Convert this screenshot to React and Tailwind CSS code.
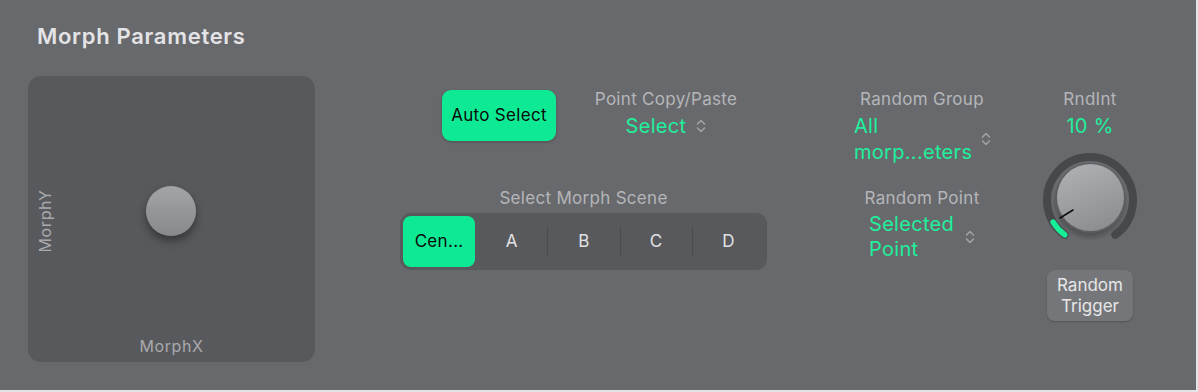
import React from "react";

function Chevrons() {
  return (
    <svg width="10" height="16" viewBox="0 0 10 16" fill="none" className="shrink-0">
      <path d="M1.5 6 L5 2.5 L8.5 6" stroke="#a3a4a8" strokeWidth="1.5" strokeLinecap="round" strokeLinejoin="round" />
      <path d="M1.5 10 L5 13.5 L8.5 10" stroke="#a3a4a8" strokeWidth="1.5" strokeLinecap="round" strokeLinejoin="round" />
    </svg>
  );
}

function Knob() {
  return (
    <svg width="96" height="100" viewBox="0 0 96 100" fill="none">
      <defs>
        <linearGradient id="kg" x1="0.3" y1="0" x2="0.7" y2="1">
          <stop offset="0" stopColor="#aeafb3" />
          <stop offset="1" stopColor="#8c8d91" />
        </linearGradient>
        <radialGradient id="ks" cx="0.5" cy="0.5" r="0.5">
          <stop offset="0.7" stopColor="#000" stopOpacity="0.35" />
          <stop offset="1" stopColor="#000" stopOpacity="0" />
        </radialGradient>
      </defs>
      <path d="M 22.7 82.8 A 43 43 0 1 1 73.3 82.8" stroke="#47484b" strokeWidth="8" strokeLinecap="round" />
      <path d="M 22.7 82.8 A 43 43 0 0 1 11.1 70.1" stroke="#16ee98" strokeWidth="5.5" strokeLinecap="round" />
      <circle cx="48" cy="51" r="38" fill="url(#ks)" />
      <circle cx="48.5" cy="46" r="35" fill="#5d5e62" />
      <circle cx="48.5" cy="45.5" r="33.5" fill="url(#kg)" />
      <path d="M18 66 L31 58" stroke="#111" strokeWidth="1.6" strokeLinecap="round" />
    </svg>
  );
}

export default function App() {
  const segs = ["A", "B", "C", "D"];
  return (
    <div className="w-[1198px] h-[392px] bg-[#e4e4e4] font-['Inter',sans-serif] tracking-[0.3px]">
      <div className="w-[1196px] h-[390px] bg-[#68696d] flex flex-col">
        <div className="pl-[37px] pt-[23px] text-[22px] leading-[26px] font-semibold text-[#e4e4e6] tracking-[0.7px]">
          Morph Parameters
        </div>
        <div className="flex items-start mt-[27px] pl-[28px]">
          {/* XY pad */}
          <div className="relative w-[287px] h-[286px] rounded-[13px] bg-[#58595c] shrink-0">
            <div className="absolute left-[17px] top-[145px] -translate-x-1/2 -translate-y-1/2 -rotate-90 text-[16px] leading-[18px] tracking-[0.6px] text-[#a9aaad]">
              MorphY
            </div>
            <div className="absolute left-0 right-0 bottom-[7px] text-center text-[16px] leading-[18px] tracking-[0.6px] text-[#a9aaad]">
              MorphX
            </div>
            <div className="absolute left-[118px] top-[110px] w-[50px] h-[50px] rounded-full bg-gradient-to-b from-[#a3a4a8] to-[#88898d] shadow-[0_5px_8px_rgba(0,0,0,0.4)]" />
          </div>

          {/* Middle column */}
          <div className="ml-[85px] w-[367px] flex flex-col shrink-0">
            <div className="flex items-start h-[112px]">
              <div className="ml-[42px] mt-[14px] w-[114px] h-[51px] rounded-[9px] bg-[#0eea93] flex items-center justify-center text-[17px] text-[#0b0b0b] shadow-[0_1px_3px_rgba(0,0,0,0.25)]">
                Auto Select
              </div>
              <div className="ml-[30px] mt-[13px] w-[160px] flex flex-col items-center">
                <div className="text-[17px] leading-[20px] text-[#b5b6b9]">Point Copy/Paste</div>
                <div className="mt-[4px] flex items-center gap-[10px]">
                  <span className="text-[20px] leading-[26px] text-[#1ff09c]">Select</span>
                  <Chevrons />
                </div>
              </div>
            </div>
            <div className="text-center text-[17px] leading-[20px] text-[#b5b6b9]">Select Morph Scene</div>
            <div className="mt-[5px] h-[57px] rounded-[11px] bg-[#58595c] p-[3px] flex">
              <div className="flex-1 rounded-[8px] bg-[#0eea93] flex items-center justify-center text-[17px] text-[#0b0b0b]">
                Cen...
              </div>
              {segs.map((s, i) => (
                <div key={s} className="flex-1 flex items-center">
                  {i > 0 ? <div className="w-px h-[31px] bg-[#4b4c4f]" /> : <div className="w-px" />}
                  <div className="flex-1 text-center text-[17px] text-[#e2e2e4]">{s}</div>
                </div>
              ))}
            </div>
          </div>

          {/* Random group / point column */}
          <div className="ml-[75px] w-[160px] flex flex-col items-center shrink-0">
            <div className="mt-[13px] text-[17px] leading-[20px] text-[#b5b6b9]">Random Group</div>
            <div className="mt-[4px] flex items-center gap-[9px] w-[136px]">
              <div className="flex-1 text-[20px] leading-[26px] text-[#1ff09c]">
                <div>All</div>
                <div>morp...eters</div>
              </div>
              <Chevrons />
            </div>
            <div className="mt-[23px] text-[17px] leading-[20px] text-[#b5b6b9]">Random Point</div>
            <div className="mt-[4px] flex items-center gap-[9px] w-[106px]">
              <div className="flex-1 text-[20px] leading-[25px] text-[#1ff09c]">
                <div>Selected</div>
                <div>Point</div>
              </div>
              <Chevrons />
            </div>
          </div>

          {/* RndInt column */}
          <div className="ml-[8px] w-[160px] flex flex-col items-center shrink-0">
            <div className="mt-[13px] text-[17px] leading-[20px] text-[#b5b6b9]">RndInt</div>
            <div className="mt-[4px] text-[20px] leading-[26px] text-[#1ff09c]">10 %</div>
            <div className="mt-[13px]">
              <Knob />
            </div>
            <div className="mt-[18px] w-[86px] h-[51px] rounded-[8px] bg-[#75767a] flex flex-col items-center justify-center text-[17px] leading-[21px] tracking-[0px] text-[#e6e6e8] shadow-[0_1px_2px_rgba(0,0,0,0.2)]">
              <div>Random</div>
              <div>Trigger</div>
            </div>
          </div>
        </div>
      </div>
    </div>
  );
}
